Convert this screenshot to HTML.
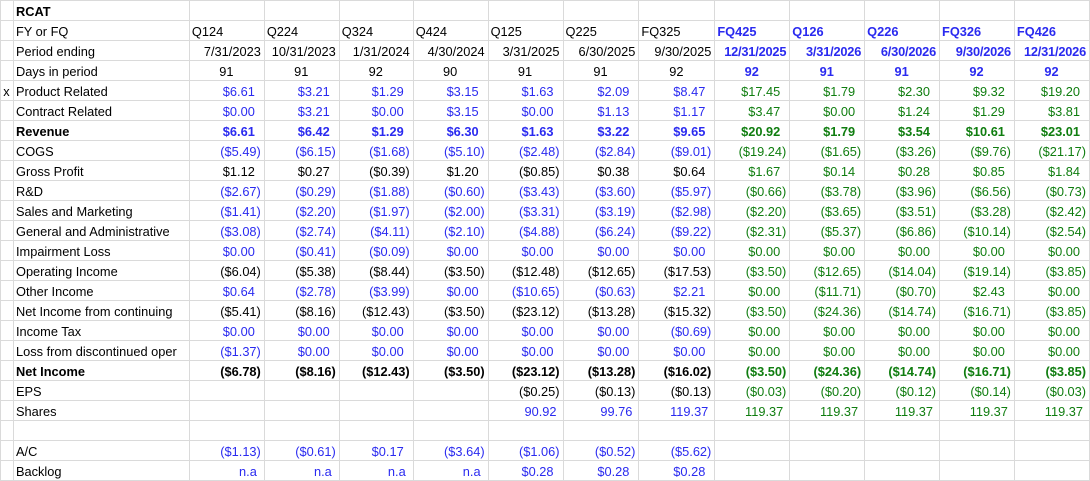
<!DOCTYPE html>
<html><head><meta charset="utf-8"><style>
html,body{margin:0;padding:0;background:#fff;width:1090px;height:481px;overflow:hidden}
table{border-collapse:collapse;table-layout:fixed;font-family:"Liberation Sans",Arial,sans-serif;font-size:12.8px;color:#000}
td{border:1px solid #dadada;height:19px;padding:1px 3px 0 2px;box-sizing:border-box;white-space:nowrap;overflow:hidden;text-align:right;line-height:17px}
tr{height:20px}
td.l{text-align:left;padding-left:2px}
td.c{text-align:center}
.b{color:#2a2af0}.g{color:#0f7d0f}.k{font-weight:bold}
.d{letter-spacing:-0.2px}
.p{padding-right:9px}
</style></head><body>
<table>
<colgroup><col style="width:13px"><col style="width:176px"><col style="width:75px"><col style="width:75px"><col style="width:74px"><col style="width:75px"><col style="width:75px"><col style="width:76px"><col style="width:76px"><col style="width:75px"><col style="width:75px"><col style="width:75px"><col style="width:75px"><col style="width:75px"></colgroup>
<tr><td></td><td class="l k">RCAT</td><td></td><td></td><td></td><td></td><td></td><td></td><td></td><td></td><td></td><td></td><td></td><td></td></tr>
<tr><td></td><td class="l">FY or FQ</td><td class="l">Q124</td><td class="l">Q224</td><td class="l">Q324</td><td class="l">Q424</td><td class="l">Q125</td><td class="l">Q225</td><td class="l">FQ325</td><td class="l b k">FQ425</td><td class="l b k">Q126</td><td class="l b k">Q226</td><td class="l b k">FQ326</td><td class="l b k">FQ426</td></tr>
<tr><td></td><td class="l">Period ending</td><td>7/31/2023</td><td>10/31/2023</td><td>1/31/2024</td><td>4/30/2024</td><td>3/31/2025</td><td>6/30/2025</td><td>9/30/2025</td><td class="b k d">12/31/2025</td><td class="b k d">3/31/2026</td><td class="b k d">6/30/2026</td><td class="b k d">9/30/2026</td><td class="b k d">12/31/2026</td></tr>
<tr><td></td><td class="l">Days in period</td><td class="c">91</td><td class="c">91</td><td class="c">92</td><td class="c">90</td><td class="c">91</td><td class="c">91</td><td class="c">92</td><td class="c b k">92</td><td class="c b k">91</td><td class="c b k">91</td><td class="c b k">92</td><td class="c b k">92</td></tr>
<tr><td class="c">x</td><td class="l">Product Related</td><td class="b p">$6.61</td><td class="b p">$3.21</td><td class="b p">$1.29</td><td class="b p">$3.15</td><td class="b p">$1.63</td><td class="b p">$2.09</td><td class="b p">$8.47</td><td class="g p">$17.45</td><td class="g p">$1.79</td><td class="g p">$2.30</td><td class="g p">$9.32</td><td class="g p">$19.20</td></tr>
<tr><td></td><td class="l">Contract Related</td><td class="b p">$0.00</td><td class="b p">$3.21</td><td class="b p">$0.00</td><td class="b p">$3.15</td><td class="b p">$0.00</td><td class="b p">$1.13</td><td class="b p">$1.17</td><td class="g p">$3.47</td><td class="g p">$0.00</td><td class="g p">$1.24</td><td class="g p">$1.29</td><td class="g p">$3.81</td></tr>
<tr class="k"><td></td><td class="l">Revenue</td><td class="b p">$6.61</td><td class="b p">$6.42</td><td class="b p">$1.29</td><td class="b p">$6.30</td><td class="b p">$1.63</td><td class="b p">$3.22</td><td class="b p">$9.65</td><td class="g p">$20.92</td><td class="g p">$1.79</td><td class="g p">$3.54</td><td class="g p">$10.61</td><td class="g p">$23.01</td></tr>
<tr><td></td><td class="l">COGS</td><td class="b">($5.49)</td><td class="b">($6.15)</td><td class="b">($1.68)</td><td class="b">($5.10)</td><td class="b">($2.48)</td><td class="b">($2.84)</td><td class="b">($9.01)</td><td class="g">($19.24)</td><td class="g">($1.65)</td><td class="g">($3.26)</td><td class="g">($9.76)</td><td class="g">($21.17)</td></tr>
<tr><td></td><td class="l">Gross Profit</td><td class="p">$1.12</td><td class="p">$0.27</td><td>($0.39)</td><td class="p">$1.20</td><td>($0.85)</td><td class="p">$0.38</td><td class="p">$0.64</td><td class="g p">$1.67</td><td class="g p">$0.14</td><td class="g p">$0.28</td><td class="g p">$0.85</td><td class="g p">$1.84</td></tr>
<tr><td></td><td class="l">R&amp;D</td><td class="b">($2.67)</td><td class="b">($0.29)</td><td class="b">($1.88)</td><td class="b">($0.60)</td><td class="b">($3.43)</td><td class="b">($3.60)</td><td class="b">($5.97)</td><td class="g">($0.66)</td><td class="g">($3.78)</td><td class="g">($3.96)</td><td class="g">($6.56)</td><td class="g">($0.73)</td></tr>
<tr><td></td><td class="l">Sales and Marketing</td><td class="b">($1.41)</td><td class="b">($2.20)</td><td class="b">($1.97)</td><td class="b">($2.00)</td><td class="b">($3.31)</td><td class="b">($3.19)</td><td class="b">($2.98)</td><td class="g">($2.20)</td><td class="g">($3.65)</td><td class="g">($3.51)</td><td class="g">($3.28)</td><td class="g">($2.42)</td></tr>
<tr><td></td><td class="l">General and Administrative</td><td class="b">($3.08)</td><td class="b">($2.74)</td><td class="b">($4.11)</td><td class="b">($2.10)</td><td class="b">($4.88)</td><td class="b">($6.24)</td><td class="b">($9.22)</td><td class="g">($2.31)</td><td class="g">($5.37)</td><td class="g">($6.86)</td><td class="g">($10.14)</td><td class="g">($2.54)</td></tr>
<tr><td></td><td class="l">Impairment Loss</td><td class="b p">$0.00</td><td class="b">($0.41)</td><td class="b">($0.09)</td><td class="b p">$0.00</td><td class="b p">$0.00</td><td class="b p">$0.00</td><td class="b p">$0.00</td><td class="g p">$0.00</td><td class="g p">$0.00</td><td class="g p">$0.00</td><td class="g p">$0.00</td><td class="g p">$0.00</td></tr>
<tr><td></td><td class="l">Operating Income</td><td>($6.04)</td><td>($5.38)</td><td>($8.44)</td><td>($3.50)</td><td>($12.48)</td><td>($12.65)</td><td>($17.53)</td><td class="g">($3.50)</td><td class="g">($12.65)</td><td class="g">($14.04)</td><td class="g">($19.14)</td><td class="g">($3.85)</td></tr>
<tr><td></td><td class="l">Other Income</td><td class="b p">$0.64</td><td class="b">($2.78)</td><td class="b">($3.99)</td><td class="b p">$0.00</td><td class="b">($10.65)</td><td class="b">($0.63)</td><td class="b p">$2.21</td><td class="g p">$0.00</td><td class="g">($11.71)</td><td class="g">($0.70)</td><td class="g p">$2.43</td><td class="g p">$0.00</td></tr>
<tr><td></td><td class="l">Net Income from continuing</td><td>($5.41)</td><td>($8.16)</td><td>($12.43)</td><td>($3.50)</td><td>($23.12)</td><td>($13.28)</td><td>($15.32)</td><td class="g">($3.50)</td><td class="g">($24.36)</td><td class="g">($14.74)</td><td class="g">($16.71)</td><td class="g">($3.85)</td></tr>
<tr><td></td><td class="l">Income Tax</td><td class="b p">$0.00</td><td class="b p">$0.00</td><td class="b p">$0.00</td><td class="b p">$0.00</td><td class="b p">$0.00</td><td class="b p">$0.00</td><td class="b">($0.69)</td><td class="g p">$0.00</td><td class="g p">$0.00</td><td class="g p">$0.00</td><td class="g p">$0.00</td><td class="g p">$0.00</td></tr>
<tr><td></td><td class="l">Loss from discontinued oper</td><td class="b">($1.37)</td><td class="b p">$0.00</td><td class="b p">$0.00</td><td class="b p">$0.00</td><td class="b p">$0.00</td><td class="b p">$0.00</td><td class="b p">$0.00</td><td class="g p">$0.00</td><td class="g p">$0.00</td><td class="g p">$0.00</td><td class="g p">$0.00</td><td class="g p">$0.00</td></tr>
<tr class="k"><td></td><td class="l">Net Income</td><td>($6.78)</td><td>($8.16)</td><td>($12.43)</td><td>($3.50)</td><td>($23.12)</td><td>($13.28)</td><td>($16.02)</td><td class="g">($3.50)</td><td class="g">($24.36)</td><td class="g">($14.74)</td><td class="g">($16.71)</td><td class="g">($3.85)</td></tr>
<tr><td></td><td class="l">EPS</td><td></td><td></td><td></td><td></td><td>($0.25)</td><td>($0.13)</td><td>($0.13)</td><td class="g">($0.03)</td><td class="g">($0.20)</td><td class="g">($0.12)</td><td class="g">($0.14)</td><td class="g">($0.03)</td></tr>
<tr><td></td><td class="l">Shares</td><td></td><td></td><td></td><td></td><td class="b" style="padding-right:6px">90.92</td><td class="b" style="padding-right:6px">99.76</td><td class="b" style="padding-right:6px">119.37</td><td class="g" style="padding-right:6px">119.37</td><td class="g" style="padding-right:6px">119.37</td><td class="g" style="padding-right:6px">119.37</td><td class="g" style="padding-right:6px">119.37</td><td class="g" style="padding-right:6px">119.37</td></tr>
<tr><td></td><td></td><td></td><td></td><td></td><td></td><td></td><td></td><td></td><td></td><td></td><td></td><td></td><td></td></tr>
<tr><td></td><td class="l">A/C</td><td class="b">($1.13)</td><td class="b">($0.61)</td><td class="b p">$0.17</td><td class="b">($3.64)</td><td class="b">($1.06)</td><td class="b">($0.52)</td><td class="b">($5.62)</td><td></td><td></td><td></td><td></td><td></td></tr>
<tr><td></td><td class="l">Backlog</td><td class="b" style="padding-right:7px">n.a</td><td class="b" style="padding-right:7px">n.a</td><td class="b" style="padding-right:7px">n.a</td><td class="b" style="padding-right:7px">n.a</td><td class="b p">$0.28</td><td class="b p">$0.28</td><td class="b p">$0.28</td><td></td><td></td><td></td><td></td><td></td></tr>
</table>
</body></html>
